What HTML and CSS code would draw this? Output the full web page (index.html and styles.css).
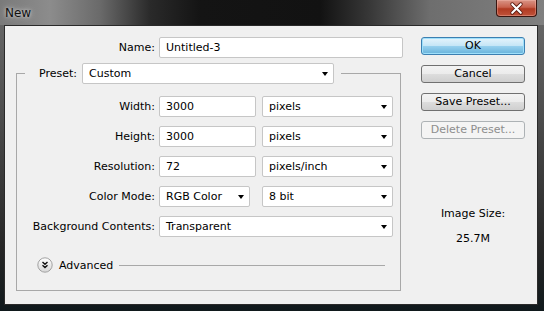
FILE: index.html
```html
<!DOCTYPE html>
<html lang="en">
<head>
    <meta charset="UTF-8">
    <title>New</title>
    <link rel="stylesheet" href="styles.css">
</head>
<body>
    <div class="titlebar">
        <span class="title">New</span>
        <div class="close">
            <svg width="41" height="17" viewBox="0 0 41 17">
                <path d="M16 4 L25 13 M25 4 L16 13" stroke="#5a1a10" stroke-width="4" stroke-linecap="round"/>
                <path d="M16 4 L25 13 M25 4 L16 13" stroke="#fff" stroke-width="2.2" stroke-linecap="round"/>
            </svg>
        </div>
    </div>

    <div class="client">
        <div class="main">
            <div class="row name-row">
                <span class="label">Name:</span>
                <div class="field w-name">Untitled-3</div>
            </div>

            <fieldset class="group">
                <legend class="preset">
                    <span class="preset-label">Preset:</span>
                    <div class="field select w-preset">Custom</div>
                </legend>

                <div class="row">
                    <span class="label">Width:</span>
                    <div class="field w-num">3000</div>
                    <div class="field select w-unit">pixels</div>
                </div>
                <div class="row">
                    <span class="label">Height:</span>
                    <div class="field w-num">3000</div>
                    <div class="field select w-unit">pixels</div>
                </div>
                <div class="row">
                    <span class="label">Resolution:</span>
                    <div class="field w-num">72</div>
                    <div class="field select w-unit">pixels/inch</div>
                </div>
                <div class="row">
                    <span class="label">Color Mode:</span>
                    <div class="field select w-mode">RGB Color</div>
                    <div class="field select w-unit wide-gap">8 bit</div>
                </div>
                <div class="row">
                    <span class="label">Background Contents:</span>
                    <div class="field select w-bg">Transparent</div>
                </div>

                <div class="advanced">
                    <svg class="adv-icon" width="16" height="16" viewBox="0 0 16 16">
                        <defs>
                            <linearGradient id="advFill" x1="0" y1="0" x2="0" y2="1">
                                <stop offset="0" stop-color="#ffffff"/>
                                <stop offset="1" stop-color="#d6d6d6"/>
                            </linearGradient>
                        </defs>
                        <circle cx="8" cy="8" r="7.2" fill="url(#advFill)" stroke="#a2a2a2"/>
                        <path d="M5.5 5 L8 7.3 L10.5 5 M5.5 8.3 L8 10.6 L10.5 8.3" fill="none" stroke="#111" stroke-width="1.4"/>
                    </svg>
                    <span>Advanced</span>
                    <div class="adv-line"></div>
                </div>
            </fieldset>
        </div>

        <div class="side">
            <div class="btn btn-ok">OK</div>
            <div class="btn">Cancel</div>
            <div class="btn">Save Preset...</div>
            <div class="btn btn-disabled">Delete Preset...</div>

            <div class="size-info">
                <p>Image Size:</p>
                <p class="size-value">25.7M</p>
            </div>
        </div>
    </div>
</body>
</html>
```

FILE: styles.css
```css
* {
    margin: 0;
    padding: 0;
    box-sizing: border-box;
    font-family: 'DejaVu Sans', Tahoma, Verdana, sans-serif;
}
body {
    width: 544px;
    height: 311px;
    overflow: hidden;
    font-size: 11px;
    color: #000;
    background: linear-gradient(to bottom, #6c6c6c 0, #4a4a4a 40%, #262626 80%, #10191c 100%);
}
.titlebar {
    height: 25px;
    display: flex;
    justify-content: space-between;
    align-items: flex-start;
    background: linear-gradient(to right, #7a7a7a 0, #8c8c8c 50px, #6a6a6a 100px, #2a2a2a 150px, #141414 200px, #121212 320px, #383838 370px, #6e6e6e 430px, #808080 544px);
}
.title {
    padding-left: 5px;
    line-height: 26px;
    font-size: 12px;
    color: #111;
    text-shadow: 0 0 6px #c8c8c8, 0 0 3px #d0d0d0;
}
.close {
    width: 41px;
    height: 17px;
    margin-right: 7px;
    border: 1px solid #3a1510;
    border-top: none;
    border-radius: 0 0 4px 4px;
    background: linear-gradient(to bottom, #d99486 0, #c8624e 45%, #b03a22 55%, #c0523a 100%);
    box-shadow: inset 0 0 0 1px rgba(255, 200, 190, 0.35);
    display: flex;
}
.client {
    margin: 0 6px 0 4px;
    height: 280px;
    border: 1px solid #2a2a2a;
    background-color: #f0f0f0;
    display: flex;
}
.main {
    width: 398px;
}
.row {
    display: flex;
    align-items: center;
    gap: 4px;
    height: 21px;
    margin-bottom: 9px;
}
.row:last-of-type {
    margin-bottom: 0;
}
.name-row {
    margin-top: 11px;
    margin-bottom: 0;
}
.label {
    text-align: right;
    white-space: nowrap;
}
.name-row .label {
    width: 150px;
}
.group .label {
    width: 138px;
}
.field {
    height: 21px;
    line-height: 19px;
    padding: 0 6px;
    background-color: #fff;
    border: 1px solid #c6c6c6;
    border-radius: 2px;
    position: relative;
    white-space: nowrap;
}
.select::after {
    content: "";
    position: absolute;
    right: 5px;
    top: 8px;
    border-left: 3.5px solid transparent;
    border-right: 3.5px solid transparent;
    border-top: 4px solid #000;
}
.w-name { width: 244px; }
.w-preset { width: 252px; }
.w-num { width: 97px; }
.w-unit { width: 131px; margin-left: 2px; }
.w-mode { width: 91px; }
.wide-gap { margin-left: 8px; }
.w-bg { width: 234px; }
.group {
    margin: 5px 0 0 11px;
    width: 385px;
    border: 1px solid #a8a8a8;
    padding: 12px 0 17px 0;
    min-width: 0;
}
.preset {
    margin-left: 8px;
    padding: 0 7px 0 14px;
    display: flex;
    align-items: center;
    gap: 5px;
}
.advanced {
    display: flex;
    align-items: center;
    margin: 20px 0 0 20px;
    height: 16px;
}
.adv-icon {
    margin-right: 6px;
}
.adv-line {
    width: 266px;
    height: 1px;
    margin-left: 6px;
    background-color: #a8a8a8;
}
.side {
    margin-left: 18px;
    width: 104px;
    padding-top: 11px;
}
.btn {
    height: 18px;
    line-height: 16px;
    margin-bottom: 10px;
    text-align: center;
    border: 1px solid #707070;
    border-radius: 3px;
    background: linear-gradient(to bottom, #f3f3f3 0, #ebebeb 50%, #dddddd 50%, #cfcfcf 100%);
}
.btn-ok {
    border-color: #3c7fb1;
    background: linear-gradient(to bottom, #e5f4fc 0, #c4e5f6 50%, #98d1ef 50%, #68b3db 100%);
    box-shadow: inset 0 0 0 1px #9fe0fb;
}
.btn-disabled {
    color: #8d8d8d;
    border-color: #adb2b5;
    background: #f4f4f4;
}
.size-info {
    margin-top: 68px;
    text-align: center;
    line-height: 13px;
}
.size-value {
    margin-top: 12px;
}
```
